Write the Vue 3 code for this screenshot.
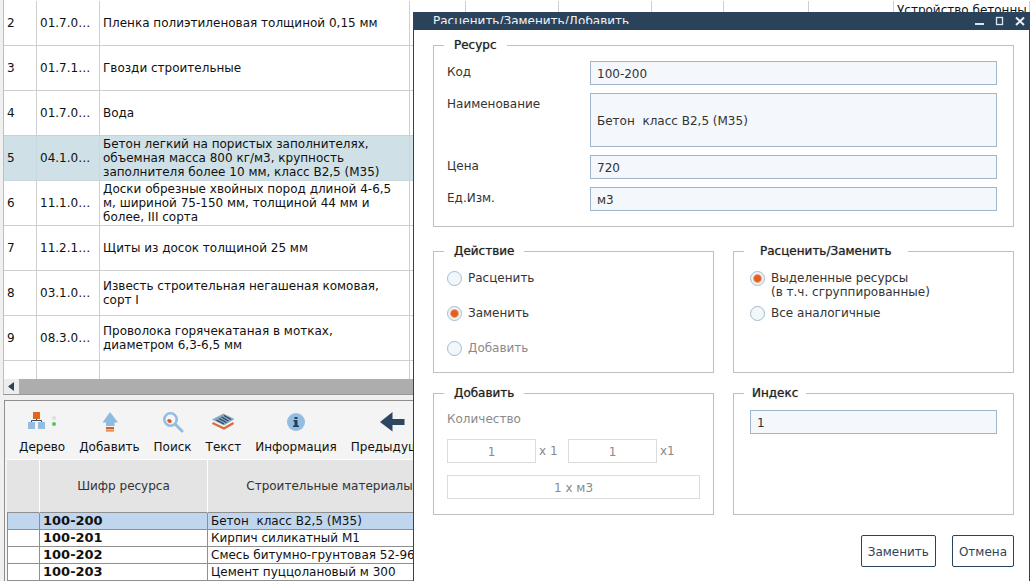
<script setup>
import { ref } from 'vue'

const resources = [
  { n: 2, code: '01.7.0…', name: 'Пленка полиэтиленовая толщиной 0,15 мм', work: 'Устройство бетонны' },
  { n: 3, code: '01.7.1…', name: 'Гвозди строительные' },
  { n: 4, code: '01.7.0…', name: 'Вода' },
  { n: 5, code: '04.1.0…', name: 'Бетон легкий на пористых заполнителях, объемная масса 800 кг/м3, крупность заполнителя более 10 мм, класс В2,5 (М35)', active: true },
  { n: 6, code: '11.1.0…', name: 'Доски обрезные хвойных пород длиной 4-6,5 м, шириной 75-150 мм, толщиной 44 мм и более, III сорта' },
  { n: 7, code: '11.2.1…', name: 'Щиты из досок толщиной 25 мм' },
  { n: 8, code: '03.1.0…', name: 'Известь строительная негашеная комовая, сорт I' },
  { n: 9, code: '08.3.0…', name: 'Проволока горячекатаная в мотках, диаметром 6,3-6,5 мм' },
  { n: '', code: '', name: '' },
]

const materials = [
  { code: '100-200', name: 'Бетон  класс В2,5 (М35)' },
  { code: '100-201', name: 'Кирпич силикатный М1' },
  { code: '100-202', name: 'Смесь битумно-грунтовая 52-96' },
  { code: '100-203', name: 'Цемент пуццолановый м 300' },
]

const code = ref('100-200')
const title = ref('Бетон  класс В2,5 (М35)')
const price = ref('720')
const unit = ref('м3')
const index = ref('1')
const action = ref('replace')
const scope = ref('selected')
</script>

<template>
  <div class="app">
    <main class="workspace">
      <div class="list">
        <table class="resources">
          <colgroup>
            <col class="c-num"><col class="c-code"><col class="c-name"><col class="c-a"><col class="c-b"><col class="c-b"><col class="c-c"><col class="c-d"><col class="c-d"><col>
          </colgroup>
          <tbody>
            <tr v-for="(r, i) in resources" :key="i" :class="{ active: r.active }">
              <td>{{ r.n }}</td>
              <td>{{ r.code }}</td>
              <td class="name">{{ r.name }}</td>
              <td v-for="k in 6" :key="k"></td>
              <td class="work">{{ r.work }}</td>
            </tr>
          </tbody>
        </table>
      </div>
      <div class="hscroll">
        <button type="button" class="scroll-left" aria-label="Прокрутить влево">
          <svg width="15" height="15" viewBox="0 0 15 15"><path d="M10 3v9L4 7.500z" fill="#2b415a" /></svg>
        </button>
      </div>

      <section class="panel">
        <div class="toolbar">
          <button type="button" class="tool">
            <svg width="28" height="22" viewBox="0 0 28 22">
              <rect x="5" y="1" width="7" height="7" fill="#e2641f" />
              <path d="M8.500 8v2M3.500 12V9.500h10V12" fill="none" stroke="#3b4f66" />
              <rect x="0" y="11" width="7" height="7" fill="#94bde0" />
              <rect x="10" y="11" width="7" height="7" fill="#94bde0" />
              <circle cx="26" cy="7" r="2" fill="#dcdfdc" />
              <circle cx="26" cy="13" r="2" fill="#62bf62" />
            </svg>
            Дерево
          </button>
          <button type="button" class="tool">
            <svg width="18" height="22" viewBox="0 0 18 22">
              <path d="M10 1L18 11.500H14.500V15H6V11.500H2.500z" fill="#8fbbe0" />
              <rect x="6" y="16" width="8" height="2" fill="#d2602c" />
              <rect x="6" y="18" width="8" height="3" fill="#f0b08a" />
              <rect x="6" y="19" width="8" height="1" fill="#e58b5a" />
            </svg>
            Добавить
          </button>
          <button type="button" class="tool">
            <svg width="22" height="22" viewBox="0 0 22 22">
              <path d="M13.500 13.500L20 20" stroke="#94bde0" stroke-width="3" stroke-linecap="round" />
              <circle cx="8.500" cy="8.500" r="6.200" fill="#f5f6f8" stroke="#94bde0" stroke-width="2.600" />
              <ellipse cx="7.500" cy="10" rx="2.400" ry="1.800" transform="rotate(25 7.500 10)" fill="#dc5a2c" />
            </svg>
            Поиск
          </button>
          <button type="button" class="tool">
            <svg width="24" height="22" viewBox="0 0 24 22">
              <path d="M1.500 12L13 17.500L22.500 12" fill="none" stroke="#df6a37" stroke-width="2.400" />
              <path d="M1 8.500L12.500 2.500L23.500 8L13 14.500z" fill="#87abc6" />
              <path d="M5.500 9l7.500 4M8 7.500l7.500 4M10.500 6l7 4M13 4.500l7 4" stroke="#2b435c" stroke-width="1.200" fill="none" />
            </svg>
            Текст
          </button>
          <button type="button" class="tool">
            <svg width="20" height="22" viewBox="0 0 20 22">
              <circle cx="10" cy="11" r="9" fill="#93bde1" />
              <rect x="8.500" y="6" width="3" height="2" fill="#263f59" />
              <path d="M7.500 9h4v5.500h1.500v1.500H7v-1.500h1.500V10.500h-1z" fill="#263f59" />
            </svg>
            Информация
          </button>
          <button type="button" class="tool">
            <svg width="26" height="22" viewBox="0 0 26 22">
              <path d="M1 11L13.500 1V8H25.500V14H13.500V20.500z" fill="#2d4761" />
            </svg>
            Предыдущая
          </button>
        </div>

        <table class="materials">
          <colgroup><col class="m-mark"><col class="m-code"><col class="m-name"><col></colgroup>
          <thead>
            <tr><th></th><th>Шифр ресурса</th><th>Строительные материалы</th><th></th></tr>
          </thead>
          <tbody>
            <tr v-for="(m, i) in materials" :key="m.code" :class="{ active: i === 0 }">
              <td></td>
              <td class="bold">{{ m.code }}</td>
              <td>{{ m.name }}</td>
              <td></td>
            </tr>
          </tbody>
        </table>
      </section>
    </main>

    <div class="dialog" role="dialog" aria-labelledby="dlg-title">
      <header class="titlebar">
        <h1 id="dlg-title">Расценить/Заменить/Добавить</h1>
        <button type="button" aria-label="Свернуть">
          <svg width="10" height="10" viewBox="0 0 10 10"><path d="M0 8h9" stroke="#d5e6f3" stroke-width="2" /></svg>
        </button>
        <button type="button" aria-label="Развернуть">
          <svg width="10" height="10" viewBox="0 0 10 10"><rect x="1.500" y="1.500" width="6" height="7" fill="none" stroke="#dfeaf2" stroke-width="1.300" /></svg>
        </button>
        <button type="button" aria-label="Закрыть">
          <svg width="10" height="10" viewBox="0 0 10 10"><path d="M1 1.500L9 9M9 1.500L1 9" stroke="#e8eff5" stroke-width="2" /></svg>
        </button>
      </header>

      <form class="body" @submit.prevent>
        <fieldset class="resource">
          <legend>Ресурс</legend>
          <label for="f-code">Код</label>
          <input id="f-code" v-model="code" type="text">
          <label for="f-title">Наименование</label>
          <input id="f-title" v-model="title" type="text" class="tall">
          <label for="f-price">Цена</label>
          <input id="f-price" v-model="price" type="text">
          <label for="f-unit">Ед.Изм.</label>
          <input id="f-unit" v-model="unit" type="text">
        </fieldset>

        <div class="groups">
          <fieldset class="radios">
            <legend>Действие</legend>
            <label><input v-model="action" type="radio" name="action" value="price"><span>Расценить</span></label>
            <label><input v-model="action" type="radio" name="action" value="replace"><span>Заменить</span></label>
            <label class="off"><input v-model="action" type="radio" name="action" value="add" disabled><span>Добавить</span></label>
          </fieldset>
          <fieldset class="radios wide">
            <legend>Расценить/Заменить</legend>
            <label><input v-model="scope" type="radio" name="scope" value="selected"><span>Выделенные ресурсы<br>(в т.ч. сгруппированные)</span></label>
            <label><input v-model="scope" type="radio" name="scope" value="similar"><span>Все аналогичные</span></label>
          </fieldset>
          <fieldset class="adding">
            <legend>Добавить</legend>
            <label for="f-qty">Количество</label>
            <div class="factors">
              <div><input id="f-qty" type="text" value="1" disabled><span>x 1</span></div>
              <div><input type="text" value="1" aria-label="Множитель" disabled><span>x1</span></div>
            </div>
            <input type="text" value="1 x м3" aria-label="Итого" disabled>
          </fieldset>
          <fieldset class="index">
            <legend>Индекс</legend>
            <input v-model="index" type="text" aria-label="Индекс">
          </fieldset>
        </div>

        <footer class="actions">
          <button type="submit">Заменить</button>
          <button type="button">Отмена</button>
        </footer>
      </form>
    </div>
  </div>
</template>

<style>
body {
  margin: 0;
  overflow: hidden;
}
</style>

<style scoped>
.app,
.app * {
  box-sizing: border-box;
}
.app {
  position: relative;
  height: 100vh;
  overflow: hidden;
  background: #f0f0f0;
  color: #111;
  font: 12px/14px Verdana, "DejaVu Sans", sans-serif;
}
button,
input {
  font: inherit;
  color: inherit;
  margin: 0;
}
.workspace {
  display: flex;
  flex-direction: column;
  height: 100%;
  padding-left: 3px;
}
.list {
  flex: 1;
  min-height: 0;
  overflow: hidden;
  padding-top: 1px;
  background: #fff;
  border-left: 1px solid #bdbdbd;
}
table {
  width: 100%;
  table-layout: fixed;
  border-collapse: separate;
  border-spacing: 0;
}
.c-num { width: 33px; }
.c-code { width: 63px; }
.c-name { width: 310px; }
.c-a { width: 56px; }
.c-b { width: 93px; }
.c-c { width: 72px; }
.c-d { width: 85px; }
.resources td {
  height: 45px;
  padding: 0 3px;
  border-right: 1px solid #cfcfcf;
  border-bottom: 1px solid #cfcfcf;
}
.resources .name {
  padding-right: 8px;
}
.resources .work {
  padding-top: 2px;
  vertical-align: top;
  white-space: nowrap;
}
.resources .active td {
  background: #cfe0e6;
  border-color: #c7d8de;
}
.hscroll {
  display: flex;
  height: 16px;
  margin-bottom: 5px;
  background: #adadad;
  border-left: 1px solid #bdbdbd;
  border-bottom: 1px solid #979797;
}
.scroll-left {
  width: 15px;
  padding: 0;
  border: 0;
  background: #ededed;
}
.scroll-left svg {
  display: block;
}
.panel {
  margin-left: 1px;
  border-top: 1px solid #8f8f8f;
  border-left: 1px solid #8f8f8f;
  padding-left: 2px;
  background: #f4f4f4;
  overflow: hidden;
}
.toolbar {
  display: flex;
  gap: 14px;
  padding: 10px 12px 4px;
  border-bottom: 1px solid #fff;
  white-space: nowrap;
}
.tool {
  display: flex;
  flex-direction: column;
  align-items: center;
  gap: 6px;
  padding: 0;
  border: 0;
  background: none;
  line-height: 16px;
}
.m-mark { width: 33px; }
.m-code { width: 168px; }
.m-name { width: 244px; }
.materials th {
  height: 53px;
  padding: 0;
  background: #e4e4e4;
  border-right: 1px solid #fff;
  border-bottom: 1px solid #8f8f8f;
  font-weight: normal;
  color: #333;
}
.materials td {
  height: 17px;
  padding: 0 3px;
  background: #fff;
  border-right: 1px solid #8f8f8f;
  border-bottom: 1px solid #8f8f8f;
  white-space: pre;
}
.materials td:first-child {
  border-left: 1px solid #8f8f8f;
}
.materials .active td {
  background: #c0d6ee;
}
.materials .bold {
  font-size: 13px;
  font-weight: bold;
}

.dialog {
  position: absolute;
  top: 12px;
  right: 0;
  bottom: 0;
  left: 413px;
  background: #fff;
  border: solid #2b425b;
  border-width: 0 1px;
  color: #333;
}
.titlebar {
  display: flex;
  align-items: center;
  gap: 10px;
  height: 18px;
  padding: 0 4px 0 19px;
  background: #2b425b;
}
.titlebar h1 {
  flex: 1;
  align-self: flex-start;
  height: 8px;
  margin: 4px 0 0;
  overflow: hidden;
  font-size: 12px;
  line-height: 10px;
  font-weight: normal;
  color: #f0f4f8;
}
.titlebar button {
  padding: 0;
  border: 0;
  background: none;
}
.titlebar svg {
  display: block;
}
.body {
  padding: 7px 15px 0 19px;
}
fieldset {
  min-width: 0;
  margin: 0;
  padding: 0;
  border: 1px solid #bfbfbf;
}
legend {
  margin-left: -3px;
  padding: 0 10px;
  line-height: 16px;
  color: #222;
  text-shadow: 0 0 1px #777;
}
input[type="text"] {
  width: 100%;
  height: 24px;
  padding: 2px 6px 0;
  border: 1px solid #a0b6ca;
  border-radius: 0;
  background: #f4f8fd;
}
.resource {
  display: grid;
  grid-template-columns: 143px 1fr;
  row-gap: 8px;
  padding: 8px 16px 15px 13px;
}
.resource label {
  padding-top: 4px;
}
.resource input.tall {
  height: 54px;
}
.groups {
  display: grid;
  grid-template-columns: 1fr 1fr;
  grid-auto-rows: 130px;
  gap: 12px 19px;
  margin-top: 16px;
}
.radios {
  padding: 12px 13px 0;
}
.radios label {
  display: flex;
  gap: 6px;
  height: 35px;
  white-space: nowrap;
}
.radios input {
  appearance: none;
  flex: none;
  width: 15px;
  height: 15px;
  border: 1px solid #a3bbcf;
  border-radius: 50%;
  background: #f2f7fc;
}
.radios input:checked {
  background: radial-gradient(circle, #e2601f 0 3px, #f3f3f5 5px);
}
.wide {
  padding-left: 16px;
}
.wide legend {
  margin-left: -6px;
  padding: 0 16px;
}
.off,
.adding {
  color: #8a8a8a;
}
.adding {
  padding: 10px 13px 0;
}
.adding > label {
  display: block;
  line-height: 16px;
}
.adding input[type="text"] {
  display: block;
  border-color: #dcdcdc;
  background: #fff;
  color: #8a8a8a;
  text-align: center;
}
.factors {
  display: grid;
  grid-template-columns: 121px 121px;
  margin: 12px 0;
}
.factors div {
  display: flex;
  gap: 3px;
  align-items: center;
  white-space: nowrap;
}
.factors input[type="text"] {
  width: 89px;
}
.index {
  padding: 9px 16px 0;
}
.index legend {
  margin-left: -6px;
  padding: 0 8px;
}
.actions {
  display: flex;
  justify-content: flex-end;
  gap: 16px;
  padding-top: 20px;
}
.actions button {
  height: 32px;
  padding: 2px 6px 0;
  border: 1px solid #2b425b;
  border-radius: 2px;
  background: #fff;
  color: #2f4358;
}
</style>
